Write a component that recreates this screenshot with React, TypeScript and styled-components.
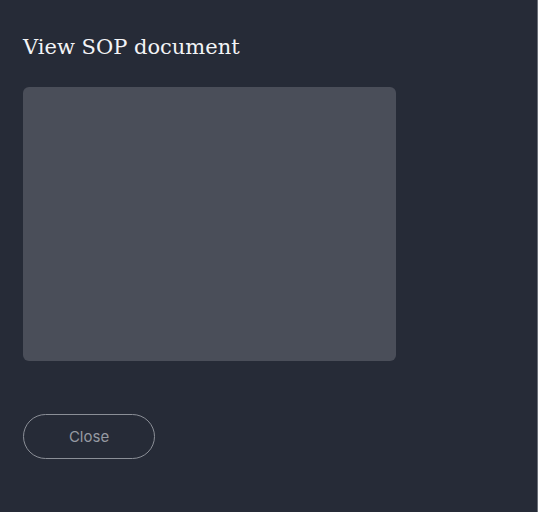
import React from "react";
import styled, { createGlobalStyle } from "styled-components";

const Global = createGlobalStyle`
  html, body { margin: 0; padding: 0; background: #262b37; }
  #root { min-height: 512px; }
`;

const Dialog = styled.div`
  box-sizing: border-box;
  width: 538px;
  height: 512px;
  background: #262b37;
  border-right: 1px solid #6b6f78;
  padding: 31px 23px 0 23px;
  display: flex;
  flex-direction: column;
`;

const Title = styled.h2`
  margin: 0;
  font-family: "DejaVu Serif", "Liberation Serif", serif;
  font-weight: 400;
  font-size: 21px;
  line-height: 32px;
  color: #f3f4f6;
`;

const Preview = styled.div`
  margin-top: 24px;
  width: 373px;
  height: 274px;
  background: #4a4e59;
  border-radius: 6px;
`;

const Footer = styled.div`
  margin-top: 53px;
  display: flex;
`;

const CloseButton = styled.button`
  box-sizing: border-box;
  width: 132px;
  height: 45px;
  border-radius: 999px;
  border: 1px solid #8b8f97;
  background: transparent;
  color: #969aa2;
  font-family: Inter, "Liberation Sans", sans-serif;
  font-size: 15px;
  cursor: pointer;
`;

export default function App() {
  return (
    <>
      <Global />
      <Dialog>
        <Title>View SOP document</Title>
        <Preview />
        <Footer>
          <CloseButton>Close</CloseButton>
        </Footer>
      </Dialog>
    </>
  );
}
